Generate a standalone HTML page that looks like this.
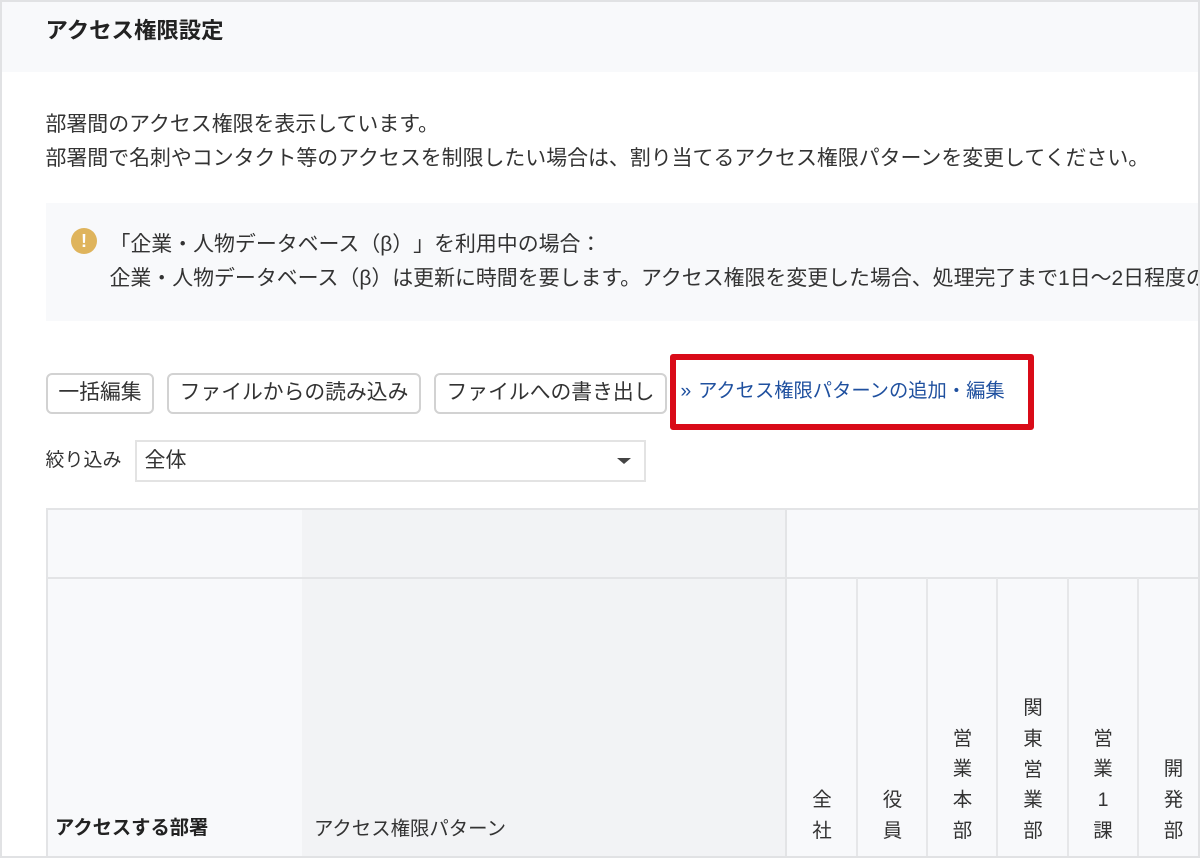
<!DOCTYPE html>
<html lang="ja"><head><meta charset="utf-8"><style>
html,body{margin:0;padding:0;background:#fff}
#p{position:relative;width:1200px;height:858px;overflow:hidden;background:#fff;font-family:"Liberation Sans","Noto Sans CJK JP",sans-serif;color:#333;font-size:20.92px;text-spacing-trim:space-all}
#p div{position:absolute;box-sizing:border-box}
.t{white-space:nowrap;line-height:30px;height:30px}
.b{border:2px solid #d2d2d2;border-radius:6px;background:#fff;height:41px;top:373px;line-height:35px;text-align:center;white-space:nowrap;color:#333;font-size:20.8px}
.c{top:578px;height:278px;width:2px;background:#e6e7e9}
.v{width:70px;text-align:center;line-height:30.8px;color:#333;font-size:19.5px}
</style></head><body><div id="p">
<div style="left:0;top:2px;width:1200px;height:70px;background:#f8f9fb"></div>
<div class="t" style="left:45.5px;top:16px;font-size:22.4px;font-weight:700;color:#222">アクセス権限設定</div>
<div class="t" style="left:45.5px;top:110px">部署間のアクセス権限を表示しています。</div>
<div class="t" style="left:45.5px;top:144px">部署間で名刺やコンタクト等のアクセスを制限したい場合は、割り当てるアクセス権限パターンを変更してください。</div>
<div style="left:46px;top:203px;width:1154px;height:118px;background:#f8f9fb"></div>
<div style="left:71px;top:228px;width:26px;height:26px;border-radius:50%;background:#dfb45c;color:#fff;font-size:18px;font-weight:700;line-height:26px;text-align:center">!</div>
<div class="t" style="left:109.5px;top:230px">「企業・人物データベース（β）」を利用中の場合：</div>
<div class="t" style="left:109.5px;top:264px">企業・人物データベース（β）は更新に時間を要します。アクセス権限を変更した場合、処理完了まで1日～2日程度の</div>
<div class="b" style="left:46px;width:108px">一括編集</div>
<div class="b" style="left:167px;width:254px">ファイルからの読み込み</div>
<div class="b" style="left:434px;width:233px">ファイルへの書き出し</div>
<div style="left:670px;top:354px;width:364px;height:76px;border:6px solid #d90b18;border-radius:3px"></div>
<div class="t" style="left:680.5px;top:377px;color:#1f509f;font-size:19.3px;word-spacing:1.5px">» アクセス権限パターンの追加・編集</div>
<div class="t" style="left:45.5px;top:446px;font-size:19px">絞り込み</div>
<div style="left:135px;top:440px;width:511px;height:42px;border:2px solid #e3e3e3;background:#fff;padding-left:7.5px;line-height:38px;font-size:21px">全体</div>
<div style="left:617px;top:458px;width:0;height:0;border-left:7px solid transparent;border-right:7px solid transparent;border-top:6px solid #444"></div>
<div style="left:46px;top:508px;width:1154px;height:348px;background:#f8f9fb;border-top:2px solid #e3e4e6;border-left:2px solid #e3e4e6"></div>
<div style="left:302px;top:510px;width:484px;height:346px;background:#f2f3f5"></div>
<div style="left:46px;top:577px;width:1154px;height:2px;background:#e3e4e6"></div>
<div style="left:785px;top:510px;width:2px;height:346px;background:#e3e4e6"></div>
<div class="c" style="left:856px"></div>
<div class="c" style="left:926px"></div>
<div class="c" style="left:996px"></div>
<div class="c" style="left:1067px"></div>
<div class="c" style="left:1137px"></div>
<div class="t" style="left:55px;top:814px;font-size:19.3px;font-weight:700;color:#222">アクセスする部署</div>
<div class="t" style="left:314px;top:814px;font-size:19.4px">アクセス権限パターン</div>
<div class="v" style="left:787px;top:785px">全<br>社</div>
<div class="v" style="left:857.5px;top:785px">役<br>員</div>
<div class="v" style="left:927.5px;top:723.5px">営<br>業<br>本<br>部</div>
<div class="v" style="left:998px;top:693px">関<br>東<br>営<br>業<br>部</div>
<div class="v" style="left:1068px;top:723.5px">営<br>業<br>1<br>課</div>
<div class="v" style="left:1138.5px;top:754px">開<br>発<br>部</div>
<div style="left:0;top:0;width:1200px;height:858px;border:2px solid #e1e2e4"></div>
</div></body></html>
